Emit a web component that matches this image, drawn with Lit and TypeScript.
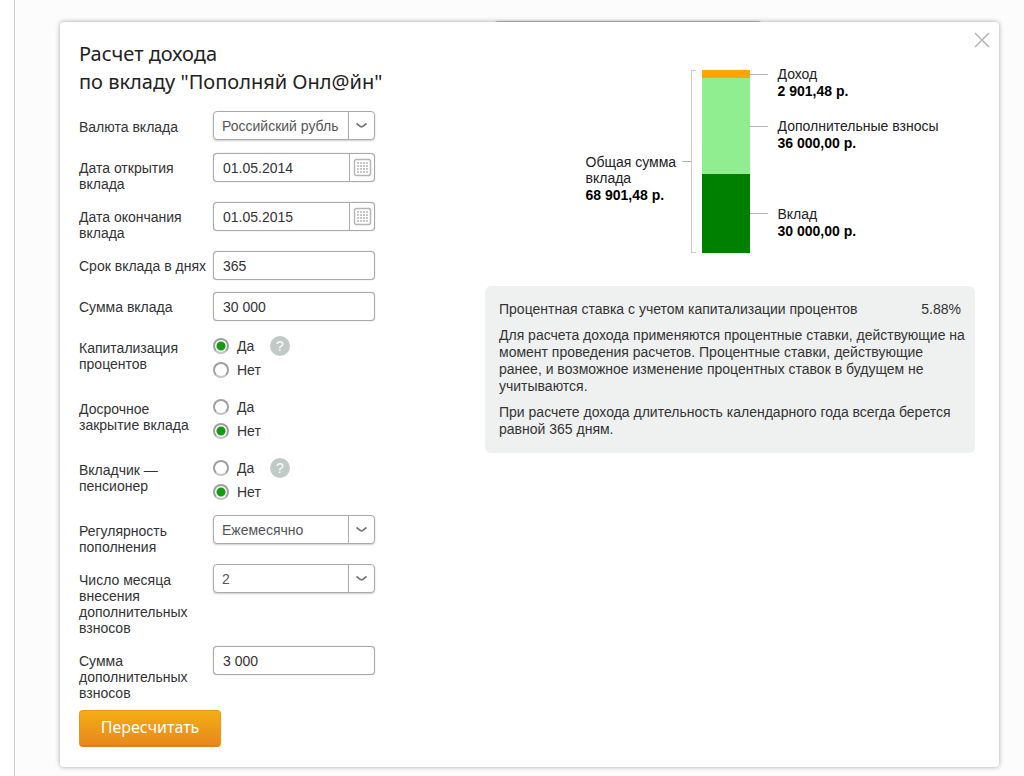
import { LitElement, html, css, svg } from "lit";
import { customElement, property } from "lit/decorators.js";
import { styleMap } from "lit/directives/style-map.js";

type Part = { name: string; sum: string; color: string; height: number };

const PARTS: Part[] = [
  { name: "Доход", sum: "2 901,48 р.", color: "#ffa500", height: 8 },
  { name: "Дополнительные взносы", sum: "36 000,00 р.", color: "#90ee90", height: 96 },
  { name: "Вклад", sum: "30 000,00 р.", color: "#008000", height: 79 },
];

@customElement("income-chart")
export class IncomeChart extends LitElement {
  @property({ attribute: false }) parts: Part[] = PARTS;

  static styles = css`
    :host {
      display: flex;
      justify-content: center;
      padding-left: 64px;
      color: #222;
      font-size: 14px;
      line-height: 16px;
    }
    .total {
      display: flex;
      align-items: center;
    }
    .first-line {
      height: 16px;
      white-space: nowrap;
    }
    .total .first-line {
      width: 96px;
      white-space: normal;
    }
    strong {
      display: block;
      line-height: 18px;
      color: #000;
      white-space: nowrap;
    }
    .tick {
      width: 9px;
      height: 1px;
      background: #b5b5b5;
    }
    .bracket {
      width: 4px;
      margin-right: 6px;
      border: 1px solid #ccc;
      border-right: 0;
    }
    .part {
      display: flex;
      align-items: center;
    }
    .segment {
      align-self: stretch;
      width: 48px;
    }
    .leader {
      width: 18px;
      height: 1px;
      margin-right: 10px;
      background: #b5b5b5;
    }
  `;

  render() {
    return html`
      <div class="total">
        <div class="first-line">Общая сумма вклада<strong>68 901,48 р.</strong></div>
        <div class="tick"></div>
      </div>
      <div class="bracket"></div>
      <div>
        ${this.parts.map(
          (p) => html`
            <div class="part" style=${styleMap({ height: `${p.height}px` })}>
              <div class="segment" style=${styleMap({ background: p.color })}></div>
              <div class="leader"></div>
              <div class="first-line">${p.name}<strong>${p.sum}</strong></div>
            </div>
          `
        )}
      </div>
    `;
  }
}

const calendarDots = [4, 7, 10, 13].flatMap((y) =>
  [4, 7, 10, 13].map((x) => svg`<rect x=${x} y=${y} width="2" height="2" fill="#c8c8c8"/>`)
);

@customElement("app-root")
export class AppRoot extends LitElement {
  static styles = css`
    :host {
      display: block;
      font-family: "Liberation Sans", Arial, sans-serif;
      font-size: 14px;
      line-height: 16px;
      color: #333;
    }
    * {
      box-sizing: border-box;
    }
    .page {
      min-height: 100vh;
      margin-left: 14px;
      padding: 22px 25px 9px 45px;
      border-left: 1px solid #ccc;
      background: #fcfcfc;
      position: relative;
    }
    .behind {
      position: absolute;
      top: 21px;
      left: 480px;
      width: 266px;
      height: 6px;
      border-radius: 4px;
      background: #bbb;
      box-shadow: 0 0 2px #ccc;
    }
    .dialog {
      position: relative;
      display: grid;
      grid-template-columns: 382px 1fr;
      column-gap: 24px;
      padding: 18px 24px 20px 19px;
      border-radius: 4px;
      background: #fff;
      box-shadow: 0 0 5px rgba(0, 0, 0, 0.35);
    }
    .close {
      position: absolute;
      top: 8px;
      right: 7px;
      padding: 2px;
      border: 0;
      background: none;
      line-height: 0;
    }
    h1 {
      margin: 0 0 15px;
      font: 400 20px/28px "Noto Sans", sans-serif;
      color: #222;
      white-space: nowrap;
    }
    .row {
      display: grid;
      grid-template-columns: 134px 162px;
      align-items: start;
      margin: 0 0 9px;
      min-height: 32px;
    }
    .caption {
      padding-top: 8px;
    }
    .box {
      display: flex;
      height: 29px;
      border: 1px solid #aaa;
      border-radius: 4px;
      background: #fff;
      box-shadow: 0 0 1px #999;
      margin-top: 1px;
      position: relative;
    }
    .box.select {
      margin-top: 0;
      box-shadow: 0 1px 2px #ccc;
    }
    input[type="text"],
    select {
      appearance: none;
      flex: 1;
      min-width: 0;
      height: 27px;
      margin: 0;
      padding: 0 9px;
      border: 0;
      background: none;
      font: inherit;
      color: #333;
      outline: none;
    }
    select {
      padding: 0 30px 0 8px;
      color: #555;
    }
    .arrow {
      position: absolute;
      top: 0;
      right: 0;
      width: 26px;
      height: 27px;
      border-left: 1px solid #aaa;
      display: grid;
      place-items: center;
      pointer-events: none;
    }
    .calendar {
      width: 25px;
      padding: 0;
      border: 0;
      border-left: 1px solid #aaa;
      background: none;
      display: grid;
      place-items: center;
    }
    .radios {
      padding: 2px 0;
    }
    .option {
      display: flex;
      align-items: center;
      height: 24px;
    }
    .option label {
      width: 33px;
      margin-left: 8px;
    }
    input[type="radio"] {
      appearance: none;
      flex: none;
      width: 16px;
      height: 16px;
      margin: 0;
      border: 2px solid #a0a0a0;
      border-bottom-color: #c4c4c4;
      border-radius: 50%;
      background: #fff;
    }
    input[type="radio"]:checked {
      background: radial-gradient(circle, #159a15 0 4px, #fff 5px);
    }
    .help {
      width: 20px;
      height: 20px;
      padding: 0;
      border: 0;
      border-radius: 50%;
      background: #c2cac7;
      color: #fff;
      font: 14px/20px "Liberation Sans", Arial, sans-serif;
    }
    .submit {
      display: block;
      width: 142px;
      height: 37px;
      padding: 0 0 3px;
      border: 1px solid #e9961c;
      border-bottom: 2px solid #d98020;
      border-radius: 4px;
      background: linear-gradient(#f4ae14, #e8881c);
      color: #fff;
      font: 16px/24px "Noto Sans", sans-serif;
    }
    .result {
      padding-top: 30px;
    }
    .note {
      margin-top: 33px;
      padding: 15px 10px 6px 14px;
      border-radius: 6px;
      background: #eff1f1;
      line-height: 17px;
    }
    .note p {
      margin: 0 0 9px;
    }
    .note .rate {
      display: flex;
      justify-content: space-between;
      padding-right: 4px;
    }
  `;

  private text(id: string, caption: string, value: string) {
    return html`<div class="row">
      <label class="caption" for=${id}>${caption}</label>
      <div class="box"><input id=${id} type="text" .value=${value} /></div>
    </div>`;
  }

  private date(id: string, caption: string, value: string) {
    return html`<div class="row">
      <label class="caption" for=${id}>${caption}</label>
      <div class="box">
        <input id=${id} type="text" .value=${value} />
        <button class="calendar" type="button" aria-label="Календарь">
          <svg width="19" height="19" viewBox="0 0 19 19">
            <rect x="1.5" y="1.5" width="16" height="16" rx="2" fill="none" stroke="#b4b4b4" stroke-width="1.4" />
            ${calendarDots}
          </svg>
        </button>
      </div>
    </div>`;
  }

  private select(id: string, caption: string, value: string) {
    return html`<div class="row">
      <label class="caption" for=${id}>${caption}</label>
      <div class="box select">
        <select id=${id}><option>${value}</option></select>
        <span class="arrow">
          <svg width="13" height="9" viewBox="0 0 13 9">
            <path d="M1.5 2.5L5.5 5.6Q6.5 6.2 7.5 5.6L11.5 2.5" fill="none" stroke="#777" stroke-width="1.8" />
          </svg>
        </span>
      </div>
    </div>`;
  }

  private radios(name: string, caption: string, yes: boolean, help = false) {
    return html`<div class="row" role="radiogroup" aria-labelledby="${name}-caption">
      <span class="caption" id="${name}-caption">${caption}</span>
      <div class="radios">
        <div class="option">
          <input type="radio" id="${name}-yes" name=${name} ?checked=${yes} />
          <label for="${name}-yes">Да</label>
          ${help ? html`<button class="help" type="button">?</button>` : ""}
        </div>
        <div class="option">
          <input type="radio" id="${name}-no" name=${name} ?checked=${!yes} />
          <label for="${name}-no">Нет</label>
        </div>
      </div>
    </div>`;
  }

  render() {
    return html`
      <div class="page">
        <div class="behind"></div>
        <main class="dialog">
          <form @submit=${(e: Event) => e.preventDefault()}>
            <h1>Расчет дохода<br />по вкладу "Пополняй Онл@йн"</h1>
            ${this.select("currency", "Валюта вклада", "Российский рубль")}
            ${this.date("opened", "Дата открытия вклада", "01.05.2014")}
            ${this.date("closed", "Дата окончания вклада", "01.05.2015")}
            ${this.text("term", "Срок вклада в днях", "365")}
            ${this.text("amount", "Сумма вклада", "30 000")}
            ${this.radios("capitalization", "Капитализация процентов", true, true)}
            ${this.radios("early", "Досрочное закрытие вклада", false)}
            ${this.radios("pensioner", "Вкладчик — пенсионер", false, true)}
            ${this.select("regularity", "Регулярность пополнения", "Ежемесячно")}
            ${this.select("day", "Число месяца внесения дополнительных взносов", "2")}
            ${this.text("extra", "Сумма дополнительных взносов", "3 000")}
            <button class="submit" type="submit">Пересчитать</button>
          </form>
          <section class="result">
            <income-chart></income-chart>
            <div class="note">
              <p class="rate"><span>Процентная ставка с учетом капитализации процентов</span><span>5.88%</span></p>
              <p>Для расчета дохода применяются процентные ставки, действующие на момент проведения расчетов. Процентные ставки, действующие ранее, и возможное изменение процентных ставок в будущем не учитываются.</p>
              <p>При расчете дохода длительность календарного года всегда берется равной 365 дням.</p>
            </div>
          </section>
          <button class="close" type="button" aria-label="Закрыть">
            <svg width="16" height="16" viewBox="0 0 16 16">
              <path d="M1 1L15 15M15 1L1 15" stroke="#b4b4b4" stroke-width="1.5" />
            </svg>
          </button>
        </main>
      </div>
    `;
  }
}
